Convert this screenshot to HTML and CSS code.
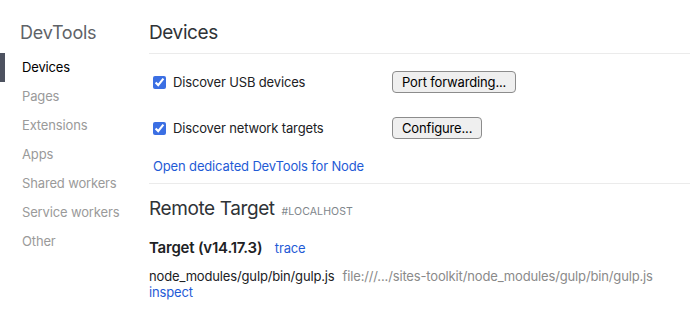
FILE: index.html
```html
<!DOCTYPE html>
<html lang="en">
<head>
<meta charset="utf-8">
<title>Inspect with Chrome Developer Tools</title>
<link rel="stylesheet" href="styles.css">
</head>
<body>
<div class="page">
  <nav class="sidebar">
    <h1 class="sidebar-title">DevTools</h1>
    <ul class="nav">
      <li class="nav-item active">Devices</li>
      <li class="nav-item">Pages</li>
      <li class="nav-item">Extensions</li>
      <li class="nav-item">Apps</li>
      <li class="nav-item">Shared workers</li>
      <li class="nav-item">Service workers</li>
      <li class="nav-item">Other</li>
    </ul>
  </nav>
  <main class="main">
    <header class="header">
      <h2 class="heading">Devices</h2>
    </header>
    <section class="settings">
      <div class="row">
        <label class="check"><input type="checkbox" checked><span>Discover USB devices</span></label>
        <button class="btn" type="button">Port forwarding...</button>
      </div>
      <div class="row">
        <label class="check"><input type="checkbox" checked><span>Discover network targets</span></label>
        <button class="btn" type="button">Configure...</button>
      </div>
      <a class="link node-link" href="#">Open dedicated DevTools for Node</a>
    </section>
    <section class="remote">
      <h2 class="heading remote-heading">Remote Target <span class="host">#LOCALHOST</span></h2>
      <div class="target">
        <span class="target-name">Target (v14.17.3)</span>
        <a class="link trace" href="#">trace</a>
      </div>
      <div class="item">
        <div class="item-line"><span class="item-name">node_modules/gulp/bin/gulp.js</span><span class="item-url">file:///.../sites-toolkit/node_modules/gulp/bin/gulp.js</span></div>
        <a class="link" href="#">inspect</a>
      </div>
    </section>
  </main>
</div>
</body>
</html>
```

FILE: styles.css
```css
html, body {
  margin: 0;
  padding: 0;
  background: #ffffff;
}

body {
  font-family: Inter, "Liberation Sans", Arial, sans-serif;
  font-size: 13px;
  letter-spacing: -0.15px;
  color: #202124;
}

.page {
  display: flex;
  min-height: 332px;
}

.sidebar {
  width: 149px;
  flex: none;
}

.sidebar-title {
  margin: 0;
  padding: 21px 0 0 20px;
  font-size: 18px;
  line-height: 24px;
  font-weight: normal;
  letter-spacing: -0.25px;
  color: #5f6368;
}

.nav {
  list-style: none;
  margin: 8px 0 0;
  padding: 0;
}

.nav-item {
  height: 29px;
  line-height: 29px;
  padding-left: 22px;
  color: #9a9a9a;
}

.nav-item.active {
  color: #000000;
  border-left: 5px solid #4d5260;
  padding-left: 17px;
}

.main {
  flex: 1;
  min-width: 0;
}

.header {
  padding: 21px 0 8px;
  border-bottom: 1px solid #ebebeb;
}

.heading {
  margin: 0;
  font-size: 19px;
  line-height: 24px;
  font-weight: normal;
  letter-spacing: -0.4px;
  color: #2f3337;
}

.settings {
  padding: 17px 0 8px;
  border-bottom: 1px solid #ebebeb;
  display: flex;
  flex-direction: column;
  align-items: flex-start;
}

.row {
  display: flex;
  align-items: center;
  height: 22px;
  margin-bottom: 24px;
}

.row:last-of-type {
  margin-bottom: 0;
}

.check {
  display: flex;
  align-items: center;
  width: 243px;
  color: #202124;
}

.check input {
  width: 13px;
  height: 13px;
  margin: 0 7px 0 4px;
  accent-color: #3b6fe3;
}

.btn {
  height: 22px;
  padding: 0 9px;
  font-family: inherit;
  font-size: 13px;
  letter-spacing: -0.15px;
  color: #000000;
  background: #efefef;
  border: 1px solid #8c8c8c;
  border-radius: 4px;
}

.link {
  color: #1f5bd6;
  text-decoration: none;
}

.node-link {
  margin-top: 18px;
  margin-left: 4px;
  line-height: 18px;
}

.remote {
  padding-top: 13px;
}

.host {
  margin-left: 2px;
  font-size: 10.5px;
  color: #80868b;
  letter-spacing: 0.1px;
}

.target {
  margin-top: 15px;
  line-height: 18px;
}

.target-name {
  font-size: 15px;
  font-weight: 600;
  letter-spacing: -0.2px;
  color: #202124;
}

.trace {
  margin-left: 9px;
}

.item {
  margin-top: 11px;
  line-height: 16px;
}

.item-name {
  color: #202124;
}

.item-url {
  margin-left: 8px;
  color: #8a8a8a;
}
```
